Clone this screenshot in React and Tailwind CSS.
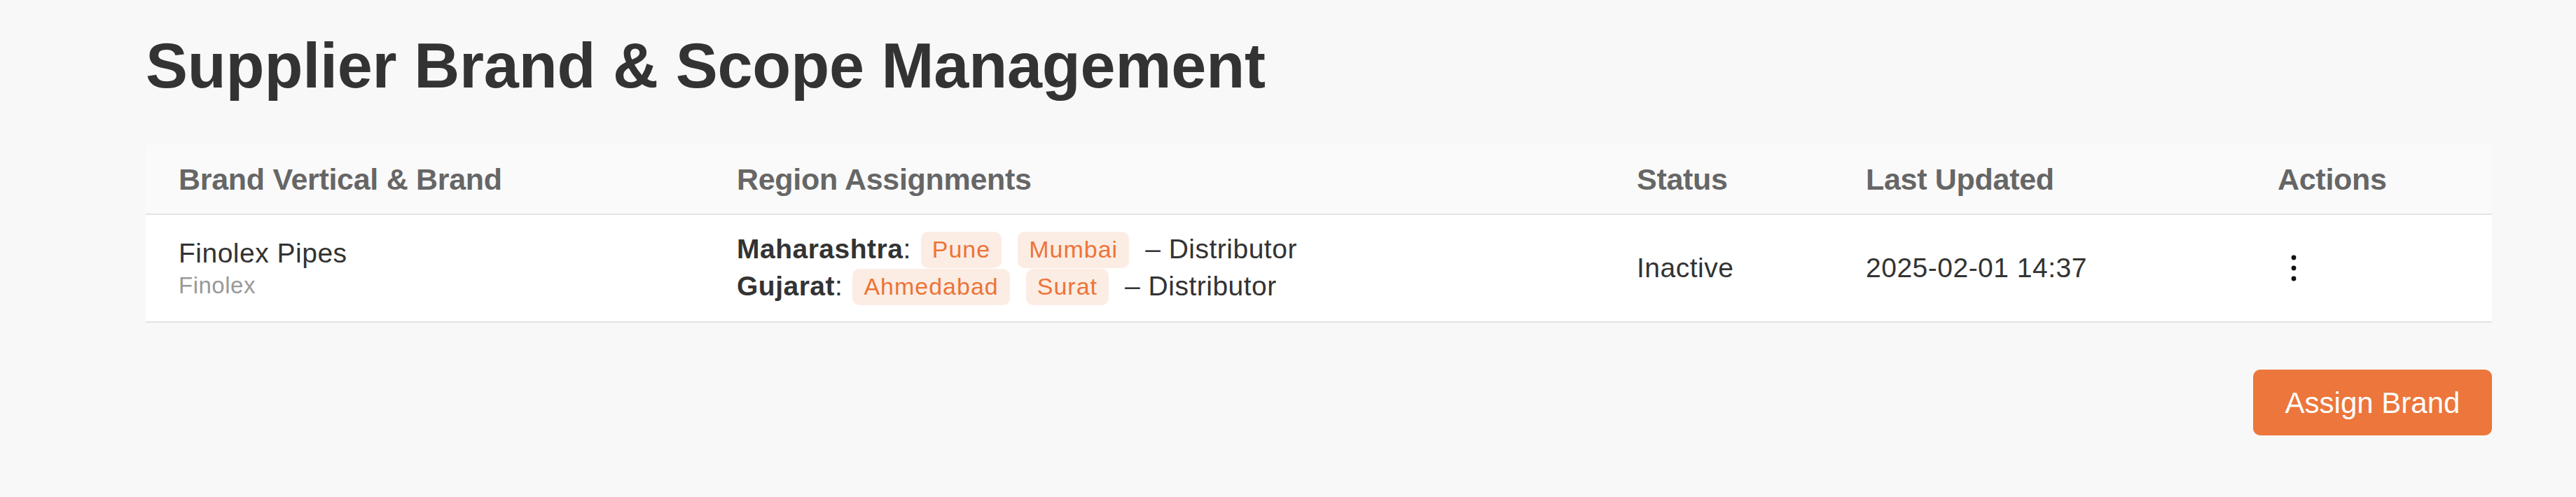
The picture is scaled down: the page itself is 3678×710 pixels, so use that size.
import React from 'react';

const regions = [
  { state: 'Maharashtra', cities: ['Pune', 'Mumbai'], role: 'Distributor' },
  { state: 'Gujarat', cities: ['Ahmedabad', 'Surat'], role: 'Distributor' },
];

const columns = ['Brand Vertical & Brand', 'Region Assignments', 'Status', 'Last Updated', 'Actions'];

const KebabIcon = () => (
  <svg width="8" height="38" viewBox="0 0 8 38" fill="#111">
    <circle cx="4" cy="4" r="3.4" />
    <circle cx="4" cy="19" r="3.4" />
    <circle cx="4" cy="34" r="3.4" />
  </svg>
);

const CityTag = ({ name, first }) => (
  <span
    className={`${first ? 'ml-[14px]' : 'ml-[23px]'} flex h-[52px] items-center rounded-[10px] bg-[#fcede4] px-[16px] text-[34px] tracking-[1px] text-[#ec7438]`}
  >
    {name}
  </span>
);

export default function App() {
  return (
    <div
      className="min-h-[710px] bg-[#f8f8f8] pl-[208px] pr-[120px] pt-[49px] text-[#333]"
      style={{ fontFamily: '"Liberation Sans", Arial, sans-serif' }}
    >
      <h1 className="text-[90px] font-bold leading-[90px] tracking-[-0.2px] text-[#333]">
        Supplier Brand &amp; Scope Management
      </h1>

      <div className="mt-[68px]">
        <div className="grid h-[100px] grid-cols-[797px_1285px_327px_588px_353px] items-center border-b-2 border-[#e3e3e3] bg-[#fafafa]">
          {columns.map((col) => (
            <div key={col} className="pl-[47px] text-[43px] font-bold tracking-[-0.3px] text-[#666]">
              {col}
            </div>
          ))}
        </div>

        <div className="grid h-[154px] grid-cols-[797px_1285px_327px_588px_353px] items-center border-b-2 border-[#e3e3e3] bg-white text-[39px] tracking-[0.5px]">
          <div className="pl-[47px]">
            <div className="leading-[44px] text-[#333]">Finolex Pipes</div>
            <div className="mt-[5px] text-[33px] leading-[38px] text-[#999]">Finolex</div>
          </div>

          <div className="flex flex-col gap-[1px] pl-[47px]">
            {regions.map((r) => (
              <div key={r.state} className="flex h-[52px] items-center">
                <span>
                  <span className="font-bold">{r.state}</span>:
                </span>
                {r.cities.map((c, i) => (
                  <CityTag key={c} name={c} first={i === 0} />
                ))}
                <span className="ml-[23px]">– {r.role}</span>
              </div>
            ))}
          </div>

          <div className="pl-[47px]">Inactive</div>
          <div className="pl-[47px]">2025-02-01 14:37</div>
          <div className="pl-[47px]">
            <button className="ml-[19px] flex items-center">
              <KebabIcon />
            </button>
          </div>
        </div>
      </div>

      <div className="mt-[67px] flex justify-end">
        <button
          className="flex h-[94px] w-[341px] items-center justify-center rounded-[10px] bg-[#ec763b] text-[42px] text-white"
          style={{ fontFamily: '"Liberation Sans", Arial, sans-serif' }}
        >
          Assign Brand
        </button>
      </div>
    </div>
  );
}
